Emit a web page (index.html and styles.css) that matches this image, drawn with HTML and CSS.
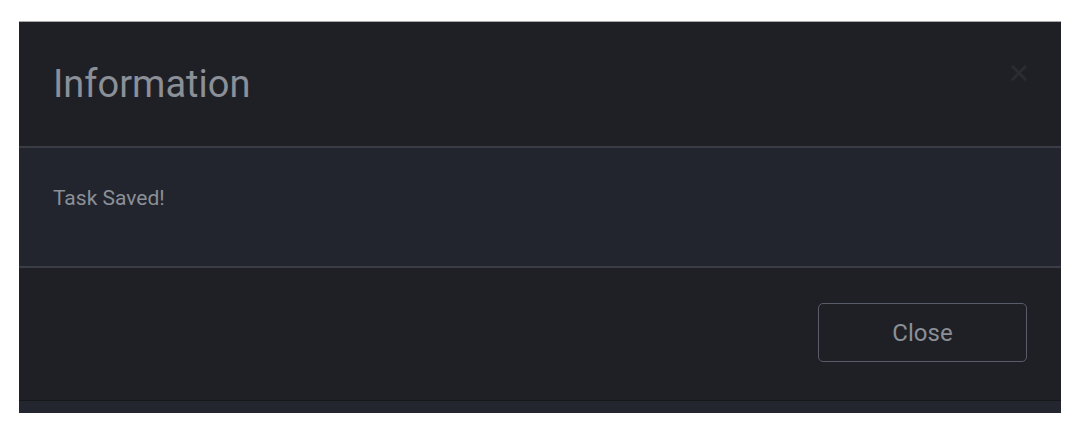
FILE: index.html
```html
<!DOCTYPE html>
<html>
<head>
<meta charset="utf-8">
<link rel="stylesheet" href="styles.css">
</head>
<body>
<div class="page">
  <div class="modal">
    <div class="modal-header">
      <h1 class="modal-title">Information</h1>
      <span class="modal-x" aria-label="close">
        <svg width="16" height="16" viewBox="0 0 16 16"><path d="M2 2 L14 14 M14 2 L2 14" stroke="#2a2c32" stroke-width="3" stroke-linecap="square"/></svg>
      </span>
    </div>
    <div class="modal-body">
      <p class="message">Task Saved!</p>
    </div>
    <div class="modal-footer">
      <button class="btn-close">Close</button>
    </div>
  </div>
  <div class="under"></div>
</div>
</body>
</html>
```
FILE: styles.css
```css
html, body {
  margin: 0;
  padding: 0;
  background: #ffffff;
}
body {
  font-family: Roboto, "Liberation Sans", sans-serif;
}
.page {
  margin: 21px 21px 0 19px;
  width: 1042px;
  background: #22252c;
}
.modal {
  border-top: 1px solid #a9a9a9;
  background: #1f2025;
}
.modal-header {
  display: flex;
  justify-content: space-between;
  align-items: flex-start;
  padding: 40px 34px 40px 34px;
  height: 44px;
  border-bottom: 2px solid #3a3d46;
}
.modal-title {
  margin: 0;
  font-size: 38px;
  line-height: 44px;
  font-weight: 400;
  color: #8a8f98;
}
.modal-x {
  display: block;
  margin-top: 3px;
  width: 16px;
  height: 16px;
}
.modal-x svg { display: block; }
.modal-body {
  background: #22252d;
  height: 80px;
  padding: 38px 34px 0 34px;
  border-bottom: 2px solid #3a3d46;
}
.message {
  margin: 0;
  font-size: 21px;
  line-height: 25px;
  color: #8b8f98;
}
.modal-footer {
  display: flex;
  justify-content: flex-end;
  padding: 35px 34px 38px 34px;
  border-bottom: 1px solid #17181c;
}
.btn-close {
  width: 209px;
  height: 59px;
  background: transparent;
  border: 1.5px solid #585d69;
  border-radius: 5px;
  font-family: Roboto, "Liberation Sans", sans-serif;
  font-size: 24px;
  color: #8a8f98;
  padding: 0;
}
.under {
  height: 12px;
  background: #23262e;
}
```
